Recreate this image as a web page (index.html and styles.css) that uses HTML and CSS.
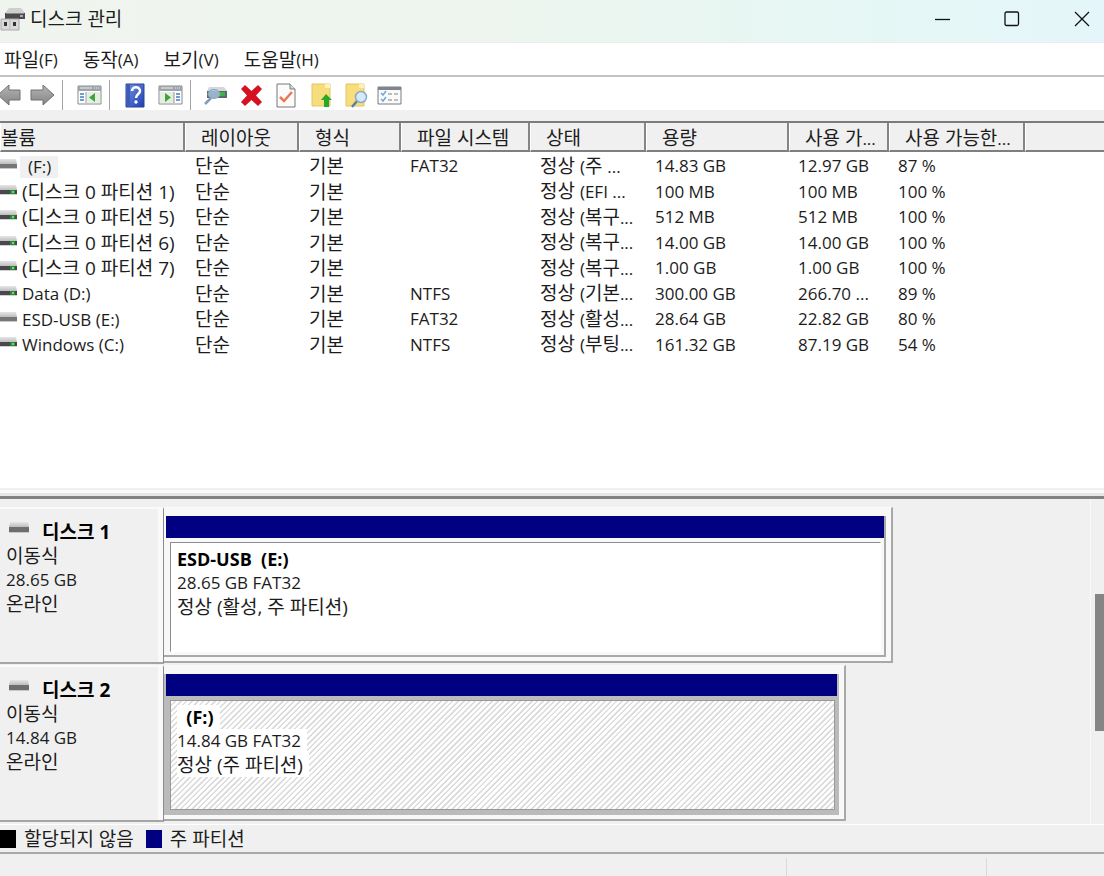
FILE: index.html
```html
<!DOCTYPE html>
<html lang="ko">
<head>
<meta charset="utf-8">
<title>디스크 관리</title>
<link rel="stylesheet" href="styles.css">
</head>
<body>
<svg class="defs" aria-hidden="true">
  <defs>
    <linearGradient id="lid" x1="0" y1="0" x2="0" y2="1"><stop offset="0" stop-color="#e6e6e6"/><stop offset="1" stop-color="#bdbdc0"/></linearGradient>
    <linearGradient id="arrow" x1="0" y1="0" x2="0" y2="1"><stop offset="0" stop-color="#b4b4b4"/><stop offset="1" stop-color="#858585"/></linearGradient>
    <linearGradient id="book" x1="0" y1="0" x2="1" y2="1"><stop offset="0" stop-color="#7093e0"/><stop offset="1" stop-color="#1f3fb5"/></linearGradient>
    <symbol id="drive" viewBox="0 0 20 11"><path d="M1 0h18l1 5H0z" fill="url(#lid)"/><path d="M0 5h20v5H0z" fill="#6e6e6e"/><path d="M0 10h20v1H0z" fill="#c8c8c8"/></symbol>
    <symbol id="fixed" viewBox="0 0 17 11"><path d="M0 0h16l1 5H0z" fill="url(#lid)"/><path d="M0 5h17v4H0z" fill="#4a474d"/><path d="M10 5h5v4h-5z" fill="#2c8a35"/><path d="M12 6h2v2h-2z" fill="#5fe36d"/><path d="M0 9h17v1H0z" fill="#d0d0d4"/></symbol>
    <symbol id="removable" viewBox="0 0 17 11"><path d="M0 0h16l1 5H0z" fill="url(#lid)"/><path d="M0 5h17v4H0z" fill="#77777a"/><path d="M0 9h17v1H0z" fill="#c8c8c8"/></symbol>
  </defs>
</svg>

<header class="titlebar">
  <svg class="app-icon" width="25" height="24" viewBox="0 0 25 24" aria-hidden="true">
    <path d="M9 1h12l4 5H5z" fill="#cfcfcf"/><path d="M5 6h20v6H5z" fill="#4b4b4b"/><path d="M6 6h18v1H6z" fill="#898989"/><path d="M20 8h3v2h-3z" fill="#aaa"/>
    <path d="M1 12h18v11H1z" fill="#d9d9d9" stroke="#aaa"/><path d="M4 15h3v4H4zM13 15h3v4h-3z" fill="#333"/><path d="M10 12v11" stroke="#bbb"/>
  </svg>
  <h1>디스크 관리</h1>
  <div class="window-buttons">
    <button type="button" aria-label="최소화"><svg width="16" height="16" viewBox="0 0 16 16"><path d="M1 8.500h15"/></svg></button>
    <button type="button" aria-label="최대화"><svg width="16" height="16" viewBox="0 0 16 16"><rect x="1" y="1" width="13.500" height="13.500" rx="1.500"/></svg></button>
    <button type="button" aria-label="닫기"><svg width="16" height="16" viewBox="0 0 16 16"><path d="M1 1l14 14M15 1L1 15"/></svg></button>
  </div>
</header>

<nav class="menu">
  <button type="button">파일<span class="lat">(F)</span></button>
  <button type="button">동작<span class="lat">(A)</span></button>
  <button type="button">보기<span class="lat">(V)</span></button>
  <button type="button">도움말<span class="lat">(H)</span></button>
</nav>

<div class="toolbar" role="toolbar" aria-label="도구">
  <button type="button" class="back" aria-label="뒤로"><svg width="24" height="24" viewBox="0 0 24 24"><path d="M1 12L12 2v5h11v10H12v5z" fill="url(#arrow)" stroke="#707070"/></svg></button>
  <button type="button" class="forward" aria-label="앞으로"><svg width="26" height="24" viewBox="0 0 26 24"><path d="M25 12L14 2v5H2v10h12v5z" fill="url(#arrow)" stroke="#707070"/></svg></button>
  <span class="sep"></span>
  <button type="button" class="tree" aria-label="콘솔 트리"><svg width="25" height="22" viewBox="0 0 25 22"><path d="M1 2h23v18H1z" fill="#fff" stroke="#85898e"/><path d="M1 2h23v5H1z" fill="#9ea4aa"/><path d="M3 4h12M17 4h1M19 4h1M21 4h1" stroke="#eee"/><path d="M3 10h4M3 13h4M3 16h4" stroke="#427fc2" stroke-width="1.500"/><path d="M9 8v11" stroke="#8f969d"/><path d="M10 8h13v11H10z" fill="#e4efe0"/><path d="M18 9v9l-6-4.500z" fill="#43a13f"/></svg></button>
  <span class="sep"></span>
  <button type="button" class="help" aria-label="도움말"><svg width="20" height="25" viewBox="0 0 20 25"><path d="M1 1h18v23H1z" fill="url(#book)" stroke="#2b4393"/><path d="M2 1h3v23H2z" fill="#3c5cb8"/><path d="M7 8c0-5 8-5 8 0 0 3-4 3-4 7" fill="none" stroke="#fff" stroke-width="2.500"/><circle cx="11" cy="19" r="1.700" fill="#fff"/></svg></button>
  <button type="button" class="pane" aria-label="작업 창"><svg width="25" height="22" viewBox="0 0 25 22"><path d="M1 2h23v18H1z" fill="#fff" stroke="#85898e"/><path d="M1 2h23v5H1z" fill="#9ea4aa"/><path d="M3 4h12M17 4h1M19 4h1M21 4h1" stroke="#eee"/><path d="M2 8h14v11H2z" fill="#e4efe0"/><path d="M7 9v9l6-4.500z" fill="#43a13f"/><path d="M16 8v11" stroke="#8f969d"/><path d="M18 10h4M18 13h4M18 16h4" stroke="#427fc2" stroke-width="1.500"/></svg></button>
  <span class="sep"></span>
  <button type="button" class="scan" aria-label="디스크 다시 검사"><svg width="24" height="22" viewBox="0 0 24 22"><path d="M5 3h15l3 4H3z" fill="#d4d7da"/><path d="M3 7h20v7H3z" fill="#5c6770"/><path d="M15 8h6v4h-6z" fill="#37b53f"/><ellipse cx="10" cy="10" rx="6" ry="4.500" fill="#a9c7df" fill-opacity=".8" stroke="#8aa3b8"/><path d="M7 14l-6 6" stroke="#7f9dbb" stroke-width="2.500"/></svg></button>
  <button type="button" class="delete" aria-label="삭제"><svg width="23" height="23" viewBox="0 0 23 23"><path d="M5 1l6.500 6L18 1l4 4-6 6.500L22 18l-4 4-6.500-6L5 22l-4-4 6-6.500L1 5z" fill="#d5121f"/></svg></button>
  <button type="button" class="props" aria-label="속성"><svg width="20" height="25" viewBox="0 0 20 25"><path d="M1 1h13l5 5v18H1z" fill="#fbfbfb" stroke="#777"/><path d="M14 1v5h5" fill="#ddd" stroke="#777"/><path d="M4 14l4 4 8-9" fill="none" stroke="#e97855" stroke-width="2.500"/></svg></button>
  <button type="button" class="up" aria-label="위로"><svg width="22" height="25" viewBox="0 0 22 25"><path d="M1 1h18v22H1z" fill="#f8dd7d" stroke="#e3c566"/><path d="M14 1h5v4h-5z" fill="#fdf1be"/><path d="M15 11l6 6h-3v7h-5v-7h-3z" fill="#27a82b"/></svg></button>
  <button type="button" class="find" aria-label="찾기"><svg width="24" height="25" viewBox="0 0 24 25"><path d="M1 1h18v22H1z" fill="#f8dd7d" stroke="#e3c566"/><path d="M14 1h5v4h-5z" fill="#fdf1be"/><path d="M12 18l-5 6" stroke="#597fa8" stroke-width="2.500"/><circle cx="16" cy="14" r="5.500" fill="#d3eafa" stroke="#8aa9c4" stroke-width="1.500"/></svg></button>
  <button type="button" class="list" aria-label="목록"><svg width="25" height="21" viewBox="0 0 25 21"><path d="M1 2h23v17H1z" fill="#fafafa" stroke="#777d84"/><path d="M1 2h23v3H1z" fill="#7f858b"/><path d="M4 8l2 2 3-4M4 14l2 2 3-4" fill="none" stroke="#6fa9da" stroke-width="1.500"/><path d="M11 9h4M17 9h4M11 15h4M17 15h4" stroke="#7b838b"/></svg></button>
</div>

<main class="volumes">
  <table>
    <colgroup><col class="c1"><col class="c2"><col class="c3"><col class="c4"><col class="c5"><col class="c6"><col class="c7"><col class="c8"><col></colgroup>
    <thead>
      <tr><th scope="col">볼륨</th><th scope="col">레이아웃</th><th scope="col">형식</th><th scope="col">파일 시스템</th><th scope="col">상태</th><th scope="col">용량</th><th scope="col">사용 가<span class="lat">...</span></th><th scope="col">사용 가능한<span class="lat">...</span></th><td></td></tr>
    </thead>
    <tbody>
      <tr><td><svg class="vol" width="17" height="11"><use href="#removable"/></svg><span class="lat selected">(F:)</span></td><td>단순</td><td>기본</td><td class="lat">FAT32</td><td>정상 <span class="lat">(</span>주 <span class="lat">...</span></td><td class="lat">14.83 GB</td><td class="lat">12.97 GB</td><td class="lat">87 %</td></tr>
      <tr><td><svg class="vol" width="17" height="11"><use href="#fixed"/></svg>(디스크 0 파티션 1)</td><td>단순</td><td>기본</td><td></td><td>정상 <span class="lat">(EFI ...</span></td><td class="lat">100 MB</td><td class="lat">100 MB</td><td class="lat">100 %</td></tr>
      <tr><td><svg class="vol" width="17" height="11"><use href="#fixed"/></svg>(디스크 0 파티션 5)</td><td>단순</td><td>기본</td><td></td><td>정상 <span class="lat">(</span>복구<span class="lat">...</span></td><td class="lat">512 MB</td><td class="lat">512 MB</td><td class="lat">100 %</td></tr>
      <tr><td><svg class="vol" width="17" height="11"><use href="#fixed"/></svg>(디스크 0 파티션 6)</td><td>단순</td><td>기본</td><td></td><td>정상 <span class="lat">(</span>복구<span class="lat">...</span></td><td class="lat">14.00 GB</td><td class="lat">14.00 GB</td><td class="lat">100 %</td></tr>
      <tr><td><svg class="vol" width="17" height="11"><use href="#fixed"/></svg>(디스크 0 파티션 7)</td><td>단순</td><td>기본</td><td></td><td>정상 <span class="lat">(</span>복구<span class="lat">...</span></td><td class="lat">1.00 GB</td><td class="lat">1.00 GB</td><td class="lat">100 %</td></tr>
      <tr><td><svg class="vol" width="17" height="11"><use href="#fixed"/></svg><span class="lat">Data (D:)</span></td><td>단순</td><td>기본</td><td class="lat">NTFS</td><td>정상 <span class="lat">(</span>기본<span class="lat">...</span></td><td class="lat">300.00 GB</td><td class="lat">266.70 ...</td><td class="lat">89 %</td></tr>
      <tr><td><svg class="vol" width="17" height="11"><use href="#removable"/></svg><span class="lat">ESD-USB (E:)</span></td><td>단순</td><td>기본</td><td class="lat">FAT32</td><td>정상 <span class="lat">(</span>활성<span class="lat">...</span></td><td class="lat">28.64 GB</td><td class="lat">22.82 GB</td><td class="lat">80 %</td></tr>
      <tr><td><svg class="vol" width="17" height="11"><use href="#fixed"/></svg><span class="lat">Windows (C:)</span></td><td>단순</td><td>기본</td><td class="lat">NTFS</td><td>정상 <span class="lat">(</span>부팅<span class="lat">...</span></td><td class="lat">161.32 GB</td><td class="lat">87.19 GB</td><td class="lat">54 %</td></tr>
    </tbody>
  </table>
</main>

<div class="splitter"></div>

<section class="graph">
  <div class="disks">
    <article class="disk">
      <div class="label">
        <h2><svg width="20" height="11" aria-hidden="true"><use href="#drive"/></svg>디스크 1</h2>
        <p>이동식</p><p class="lat">28.65 GB</p><p>온라인</p>
      </div>
      <div class="track">
        <div class="frame" style="width:78.7%">
          <div class="part">
            <div class="bar"></div>
            <div class="info">
              <p class="name">ESD-USB&nbsp; (E:)</p>
              <p class="lat">28.65 GB FAT32</p>
              <p>정상 (활성, 주 파티션)</p>
            </div>
          </div>
        </div>
      </div>
    </article>
    <article class="disk">
      <div class="label">
        <h2><svg width="20" height="11" aria-hidden="true"><use href="#drive"/></svg>디스크 2</h2>
        <p>이동식</p><p class="lat">14.84 GB</p><p>온라인</p>
      </div>
      <div class="track">
        <div class="frame" style="width:73.7%">
          <div class="part active">
            <div class="bar"></div>
            <div class="info">
              <p class="name">&nbsp; (F:)</p>
              <p class="lat">14.84 GB FAT32</p>
              <p>정상 (주 파티션)</p>
            </div>
          </div>
        </div>
      </div>
    </article>
  </div>
  <div class="scrollbar"><div class="thumb"></div></div>
</section>

<div class="legend">
  <span class="swatch unallocated"></span><span>할당되지 않음</span>
  <span class="swatch primary"></span><span>주 파티션</span>
</div>
<footer class="status"><span></span><span></span><span></span></footer>
</body>
</html>
```

FILE: styles.css
```css
* { box-sizing: border-box; }

body {
  margin: 0;
  min-height: 100vh;
  display: flex;
  flex-direction: column;
  background: #f0f0f0;
  color: #1c1c1c;
  font: 19px/24px "Open Sans", "Noto Sans CJK KR", sans-serif;
}

h1, h2, p { margin: 0; font-size: inherit; font-weight: 400; }
button { border: 0; padding: 0; background: none; color: inherit; font: inherit; display: flex; align-items: center; }
svg { display: block; }
.defs { position: absolute; width: 0; height: 0; }
.lat { font-size: 17px; }

.titlebar {
  display: flex;
  align-items: center;
  height: 43px;
  padding-bottom: 4px;
  border-bottom: 1px solid #ececec;
  background: linear-gradient(90deg, #f0f4ee 0%, #edf5ee 45%, #e5f7f5 80%, #e5f6fa 100%);
}
.app-icon { margin-right: 5px; }
.window-buttons { display: flex; gap: 54px; margin-left: auto; padding-right: 14px; }
.window-buttons svg { fill: none; stroke: #111; stroke-width: 1.300; }

.menu {
  display: flex;
  gap: 25px;
  height: 34px;
  padding: 1px 0 0 4px;
  background: #fff;
  border-bottom: 2px solid #c3c3c3;
}

.toolbar { display: flex; align-items: center; height: 33px; padding-top: 3px; background: #fff; overflow: hidden; }
.toolbar button { flex: none; }
.back { margin-left: -3px; }
.forward { margin-left: 8px; }
.sep { width: 1px; height: 30px; background: #a5a5a5; }
.forward + .sep { margin-left: 7px; }
.tree { margin-left: 14px; }
.tree + .sep { margin-left: 7px; }
.help { margin-left: 15px; }
.pane { margin-left: 13px; }
.pane + .sep { margin-left: 7px; }
.scan { margin-left: 13px; }
.delete { margin-left: 12px; }
.props { margin-left: 13px; }
.up { margin-left: 15px; }
.find { margin-left: 12px; }
.list { margin-left: 8px; }

.volumes { flex: 1; margin-top: 11px; border-top: 2px solid #7b7b7b; background: #fff; }
table { width: 100%; table-layout: fixed; border-collapse: separate; border-spacing: 0; }
.c1 { width: 185px; }
.c2 { width: 114px; }
.c3 { width: 102px; }
.c4 { width: 129px; }
.c5 { width: 116px; }
.c6 { width: 143px; }
.c7 { width: 100px; }
.c8 { width: 136px; }
th, td { padding: 0 0 0 10px; text-align: left; font-weight: 400; white-space: nowrap; overflow: hidden; }
td.lat { padding-left: 9px; }
thead th, thead td {
  height: 29px;
  padding: 3px 0 0 15px;
  line-height: 22px;
  background: #f0f0f0;
  border-bottom: 2px solid #7f7f7f;
  border-left: 1px solid #fff;
}
thead th { border-right: 2px solid #858585; }
thead th:first-child { padding-left: 0; }
tbody td { height: 26px; padding-top: 2px; line-height: 22px; }
tbody tr:nth-child(even) td { height: 25px; }
tbody td:first-child { padding-left: 0; }
.vol { display: inline-block; margin-right: 5px; vertical-align: 3px; }
.selected { display: inline-block; margin-left: -2px; padding: 0 7px 0 8px; background: #f0f0f0; }

.splitter { height: 11px; border-top: 2px solid #f0f0f0; border-bottom: 3px solid #828282; background: linear-gradient(#fafafa 50%, #e6e6e6 50%); }

.graph { display: flex; background: #f0f0f0; border-bottom: 1px solid #fff; }
.disks { flex: 1; padding: 8px 0 2px; }
.disk { display: flex; height: 157px; }
.disk + .disk { margin-top: 1px; }
.label {
  width: 164px;
  padding: 11px 0 0 6px;
  border-top: 2px solid #fafafa;
  border-right: 1px solid #8c8c8c;
  border-bottom: 2px solid #a5a5a5;
  box-shadow: inset -5px 0 #f9f9f9;
}
.label h2 { display: flex; gap: 13px; padding-left: 3px; font-size: 19px; font-weight: 700; color: #000; }
.label h2 svg { margin-top: 2px; }
.track { flex: 1; }
.frame { height: 156px; padding: 8px 5px 4px 0; border-top: 1px solid #fafafa; border-right: 2px solid #a8a8a8; border-bottom: 2px solid #a8a8a8; background: #f8f8f8; }
.part { height: 100%; display: flex; flex-direction: column; padding-left: 2px; border-right: 2px solid #a8a8a8; border-bottom: 2px solid #a8a8a8; }
.bar { height: 22px; background: #000080; }
.info {
  flex: 1;
  margin: 4px 3px 3px 4px;
  padding: 4px 0 0 6px;
  border: 1px solid #8c8c8c;
  border-right-color: #fff;
  border-bottom-color: #fff;
  background: #fff;
}
.name { font-size: 18px; font-weight: 700; color: #000; }
.info p { width: fit-content; }
.part.active { background: #bbb; border-color: #bbb; padding-left: 0; }
.active .bar { margin-left: 2px; }
.active .info {
  border-color: #999;
  margin-left: 6px;
  margin-right: 2px;
  background: repeating-linear-gradient(135deg, #fff 0 2px, #dadada 3px 4px);
}
.active .info p { background: #fff; padding-right: 6px; }

.scrollbar { width: 14px; padding: 95px 0 0 4px; border-left: 1px solid #f8f8f8; }
.thumb { height: 137px; background: #858585; }

.legend { display: flex; align-items: center; gap: 8px; height: 29px; padding-top: 1px; border-bottom: 2px solid #a8a8a8; }
.swatch { width: 16px; height: 18px; }
.unallocated { background: #000; }
.primary { background: #000080; margin-left: 4px; }

.status { display: flex; height: 22px; padding-top: 4px; }
.status span:first-child { flex: 1; }
.status span + span { width: 200px; border-left: 1px solid #d9d9d9; }
.status span:last-child { width: 118px; }
```
